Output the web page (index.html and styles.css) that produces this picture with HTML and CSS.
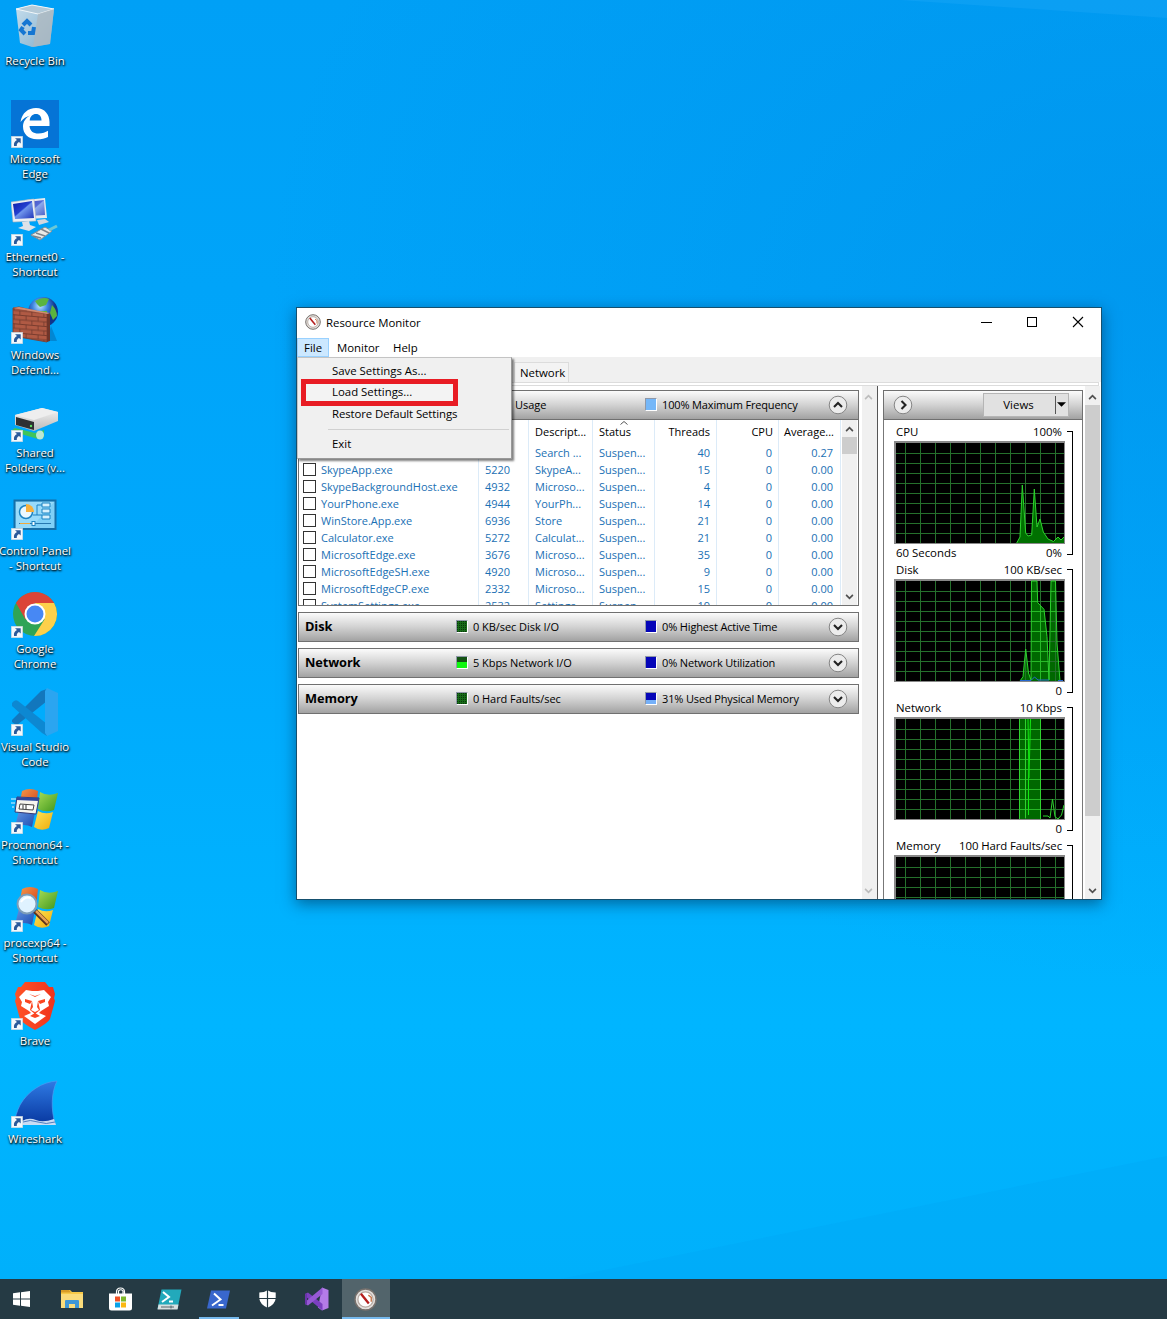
FILE: index.html
```html
<!DOCTYPE html>
<html lang="en">
<head>
<meta charset="utf-8">
<title>Resource Monitor</title>
<link rel="stylesheet" href="styles.css">
</head>
<body>
<svg class="defs" width="0" height="0" aria-hidden="true">
  <defs>
    <linearGradient id="gBin" x1="0" y1="0" x2="1" y2="1"><stop offset="0" stop-color="#d7e3ec"/><stop offset="1" stop-color="#8fb0c8"/></linearGradient>
    <linearGradient id="gScreen" x1="0" y1="0" x2="1" y2="1"><stop offset="0" stop-color="#0b1aa8"/><stop offset=".45" stop-color="#2440cf"/><stop offset=".5" stop-color="#6f95ec"/><stop offset="1" stop-color="#1c31b8"/></linearGradient>
    <linearGradient id="gDrive" x1="0" y1="0" x2="0" y2="1"><stop offset="0" stop-color="#f4f4f4"/><stop offset="1" stop-color="#b9b9b9"/></linearGradient>
    <linearGradient id="gFin" x1="0" y1="0" x2="0" y2="1"><stop offset="0" stop-color="#2f7ae4"/><stop offset="1" stop-color="#0838a0"/></linearGradient>
    <linearGradient id="gBrave" x1="0" y1="0" x2="1" y2="0"><stop offset="0" stop-color="#ff5326"/><stop offset="1" stop-color="#f0331c"/></linearGradient>
    <linearGradient id="gR" x1="0" y1="0" x2="1" y2="1"><stop offset="0" stop-color="#f59a4a"/><stop offset="1" stop-color="#d2401a"/></linearGradient>
    <linearGradient id="gG" x1="0" y1="0" x2="1" y2="1"><stop offset="0" stop-color="#a5dc55"/><stop offset="1" stop-color="#3f961c"/></linearGradient>
    <linearGradient id="gB" x1="0" y1="0" x2="1" y2="1"><stop offset="0" stop-color="#6a9be6"/><stop offset="1" stop-color="#1c4bb0"/></linearGradient>
    <linearGradient id="gY" x1="0" y1="0" x2="1" y2="1"><stop offset="0" stop-color="#ffe65a"/><stop offset="1" stop-color="#eeab0a"/></linearGradient>
    <radialGradient id="gGlobe" cx=".4" cy=".3"><stop offset="0" stop-color="#bfe6ff"/><stop offset=".5" stop-color="#3c84e0"/><stop offset="1" stop-color="#10348c"/></radialGradient>
    <path id="grid" d="M10.500 1V101M25.500 1V101M40.500 1V101M55.500 1V101M70.500 1V101M85.500 1V101M100.500 1V101M115.500 1V101M130.500 1V101M145.500 1V101M160.500 1V101M1 11.500H169M1 21.500H169M1 31.500H169M1 41.500H169M1 51.500H169M1 61.500H169M1 71.500H169M1 81.500H169M1 91.500H169" stroke="#25702c" fill="none"/>
    <pattern id="bricks" width="12" height="9" patternUnits="userSpaceOnUse" patternTransform="skewY(5)"><rect width="12" height="9" fill="#b05a44"/><path d="M0 .5H12M0 5H12M3 0V5M9 5V9" stroke="#6d362a" stroke-width=".8"/></pattern>
    <symbol id="shortcut" viewBox="0 0 12 12"><path d="M.3 .3H11.7V11.7H.3Z" fill="#f4f8fb" stroke="#cbd5dc" stroke-width=".6"/><path d="M4 2.2H9.7V7.6L8 6C6.200 7 5.600 8 5.800 10H3C2.600 7 3.800 5.200 6 4.100Z" fill="#2a5a9b"/></symbol>
    <symbol id="flag" viewBox="0 0 48 48"><path d="M11 5Q19 1 27 5L25 22Q17 18 8 22Z" fill="url(#gR)"/><path d="M29 6Q37 11 47 7L43 24Q35 27 27 23Z" fill="url(#gG)"/><path d="M8 24Q16 20 24.500 24L21 41Q13 37 4 41Z" fill="url(#gB)"/><path d="M27 25Q34 29 42 26L38 42Q30 46 23 41Z" fill="url(#gY)"/></symbol>
    <symbol id="gauge" viewBox="0 0 16 16"><circle cx="8" cy="8" r="7.300" fill="#e4e0dd" stroke="#77716d" stroke-width="1"/><circle cx="8" cy="8" r="5.300" fill="#fff" stroke="#b7aaa3" stroke-width=".9"/><path d="M4.800 4L10.300 10.800" stroke="#b51d1d" stroke-width="1.600"/><path d="M10 5l2 1.500v3" stroke="#c87a50" fill="none"/></symbol>
    <symbol id="up" viewBox="0 0 10 7"><path d="M1 6L5 2L9 6" fill="none" stroke="currentColor" stroke-width="2"/></symbol>
    <symbol id="down" viewBox="0 0 10 7"><path d="M1 1L5 5L9 1" fill="none" stroke="currentColor" stroke-width="2"/></symbol>
  </defs>
</svg>

<main class="desktop">
  <svg class="rays" width="1167" height="1279" viewBox="0 0 1167 1279" preserveAspectRatio="none" aria-hidden="true">
    <path d="M560 1279L1167 1156V1279Z" fill="#009ff0" opacity=".22"/>
    <path d="M900 0H1167V18Z" fill="#39b5ff" opacity=".2"/>
  </svg>

  <nav class="icons">
    <div class="icon"><svg viewBox="0 0 48 48"><path d="M5 7L21 3L43 7L39 42L21 45L9 41Z" fill="url(#gBin)" opacity=".92"/><path d="M5 7L21 3L43 7L27 12Z" fill="#b4cad8" stroke="#f2f7fa"/><path d="M27 12L43 7L39 42L22 45Z" fill="#aeb9c1" opacity=".8"/><g fill="none" stroke="#1576d2" stroke-width="4"><path d="M12 23L16 19L20 23"/><path d="M23 25L22 31L17 31"/><path d="M14 32L10 28L12 25"/></g></svg><span>Recycle Bin</span></div>
    <div class="icon"><svg viewBox="0 0 48 48"><rect width="48" height="48" fill="#0574d6"/><path d="M9.500 22C11 13 17 8 25 8C34 8 38.500 15 38.500 22V26H18.500C19 31 22 33.500 27.500 33.500C31.500 33.500 34.500 32.300 37 30.800V37C34 38.500 30.500 39.300 26 39.300C17.500 39.300 12 34 12 26.500C12 21.500 15 17.500 19.500 15.500C15.500 16.500 12 18.500 9.500 22ZM18.700 20.500H30.500C30.500 16.500 28.500 14 25 14C21.500 14 19 16.500 18.700 20.500Z" fill="#fff"/><use href="#shortcut" x="0" y="36" width="12" height="12"/></svg><span>Microsoft<br>Edge</span></div>
    <div class="icon"><svg viewBox="0 0 48 48"><path d="M14 2L34 0L36 20L16 21Z" fill="#e6e9ee"/><path d="M16 4L33 2L34 17L18 18Z" fill="url(#gScreen)" opacity=".75"/><path d="M26 22L34 21L38 24L28 27Z" fill="#d2d6de"/><path d="M0 4L23 1L25 23L2 24Z" fill="#eceff3" stroke="#aeb5c0" stroke-width=".6"/><path d="M2 6L21 3L23 20L4 21Z" fill="url(#gScreen)"/><path d="M11 24L18 23L19 27L25 29L18 33L7 30L12 28Z" fill="#dfe2e8"/><path d="M20 37L34 29L41 33L29 42Z" fill="#e9e9e6" stroke="#858c94"/><path d="M22 38L30 40M25 35L34 38M30 31L38 35" stroke="#7c838c" stroke-width="1.500"/><path d="M38 32L46 28" stroke="#6bc7d5" stroke-width="3"/><use href="#shortcut" x="0" y="36" width="12" height="12"/></svg><span>Ethernet0 -<br>Shortcut</span></div>
    <div class="icon"><svg viewBox="0 0 48 48"><circle cx="32" cy="16" r="15" fill="url(#gGlobe)"/><path d="M24 5Q32 0 38 3L35 9L29 11L26 8ZM41 9Q46 14 46 20L42 24L39 17ZM28 15L36 15L36 22L30 24Z" fill="#5ab43f"/><path d="M40 30L46 45H36Z" fill="#06417c" opacity=".3"/><path d="M2 12L8 11L36 18V46L2 40Z" fill="url(#bricks)" stroke="#7b3a2c" stroke-width=".8"/><path d="M36 18L39 17V45L36 46Z" fill="#70352a"/><path d="M2 12L8 11L39 17L36 18Z" fill="#d08a72"/><use href="#shortcut" x="0" y="36" width="12" height="12"/></svg><span>Windows<br>Defend...</span></div>
    <div class="icon"><svg viewBox="0 0 48 48"><path d="M4 34L24 39L33 36L33 43L27 45L0 37Z" fill="#3fc45a"/><ellipse cx="29" cy="41" rx="4" ry="4.500" fill="#bce7d2"/><path d="M4 21L31 14L47 18V27L23 37L4 31Z" fill="url(#gDrive)"/><path d="M5 23L23 28V36L5 31Z" fill="#2e3032"/><path d="M4 21L31 14L47 18L23 26Z" fill="#eee"/><circle cx="20" cy="32" r="1.200" fill="#5fe063"/><use href="#shortcut" x="0" y="36" width="12" height="12"/></svg><span>Shared<br>Folders (v...</span></div>
    <div class="icon"><svg viewBox="0 0 48 48"><rect x="3.500" y="8.500" width="41" height="28.500" fill="#7fd0f7" stroke="#156fa8" stroke-width="2"/><path d="M5 10H43L20 36H5Z" fill="#a9e2fb" opacity=".6"/><circle cx="15" cy="20" r="6.500" fill="#eaf8ff" stroke="#1b83c3" stroke-width="1.500"/><path d="M15 20V12A8 8 0 0 1 23 20Z" fill="#f6b03c"/><path d="M22 23H26V13H31M26 23H31" stroke="#1b83c3" fill="none"/><path d="M31 11h8v4h-8zM31 17h8v4h-8zM31 23h8v4h-8z" fill="#d6f1fd" stroke="#1b83c3"/><path d="M8 31.500H40" stroke="#2778b0"/><path d="M9 31.500h10" stroke="#f0a93b"/><rect x="21" y="29.500" width="3" height="4" fill="#fff" stroke="#1b83c3"/><use href="#shortcut" x="0" y="36" width="12" height="12"/></svg><span>Control Panel<br>- Shortcut</span></div>
    <div class="icon"><svg viewBox="0 0 48 48"><circle cx="24" cy="24" r="22" fill="#2fa456"/><path d="M5 13A22 22 0 0 1 43.100 13H24L14.500 29.500Z" fill="#db4437"/><path d="M43.100 13A22 22 0 0 1 23 46L33.500 29.500L24 13Z" fill="#fdd04b"/><circle cx="24" cy="24" r="10.500" fill="#fff"/><circle cx="24" cy="24" r="8.500" fill="#4788f4"/><use href="#shortcut" x="0" y="36" width="12" height="12"/></svg><span>Google<br>Chrome</span></div>
    <div class="icon"><svg viewBox="0 0 48 48"><path d="M1 32L30 3L36 1V13L6 37Q3 36 1 34Z" fill="#1277bd"/><path d="M1 15Q4 11 7 13L36 36V48L31 45L1 18Z" fill="#0d88d2"/><path d="M36 0L47 5V43L36 48L34 45V3Z" fill="#2ba5f0"/><use href="#shortcut" x="0" y="36" width="12" height="12"/></svg><span>Visual Studio<br>Code</span></div>
    <div class="icon"><svg viewBox="0 0 48 48"><use href="#flag" width="48" height="48"/><path d="M6 11L28 12L25 28L4 26Z" fill="#f6f5ef" stroke="#353a76"/><path d="M6 11L28 12L27.500 15L5.500 14Z" fill="#30479c"/><path d="M9 18L23 19L22 24L8 23Z" fill="#fff" stroke="#444"/><path d="M12 19v4M15 19v4" stroke="#333"/><path d="M0 13H5M0 17H4M1 21H3" stroke="#e7f4ff"/><use href="#shortcut" x="0" y="36" width="12" height="12"/></svg><span>Procmon64 -<br>Shortcut</span></div>
    <div class="icon"><svg viewBox="0 0 48 48"><use href="#flag" width="48" height="48"/><path d="M24 27L37 40" stroke="#5b331b" stroke-width="5"/><path d="M25 27L37 39" stroke="#e7a052" stroke-width="2.500"/><circle cx="16" cy="20" r="9.500" fill="#dff2ff" stroke="#7d9db8" stroke-width="2"/><path d="M10 18Q14 12 20 14" stroke="#fff" stroke-width="2" fill="none"/><use href="#shortcut" x="0" y="36" width="12" height="12"/></svg><span>procexp64 -<br>Shortcut</span></div>
    <div class="icon"><svg viewBox="0 0 48 48"><path d="M14 0H34L38 5L42 5L44 12L43 16L44 19L39 37Q37 41 24 48Q11 41 9 37L4 19L5 16L4 12L7 5L10 5Z" fill="url(#gBrave)"/><path d="M15 8L21 9H27L33 8L40 15L37 20L38 24L30 29L28 31L35 34L24 42L13 34L20 31L18 29L10 24L11 20L8 15Z" fill="#fff"/><path d="M14 17L21 19L19 22L14 20ZM34 17L27 19L29 22L34 20ZM21 19L22 25L20 28L24 30L28 28L26 25L27 19L29 28L24 32L19 28ZM18 12L24 14L30 12L24 15ZM19 34L24 31L29 34L24 36Z" fill="#fb4520"/><use href="#shortcut" x="0" y="36" width="12" height="12"/></svg><span>Brave</span></div>
    <div class="icon"><svg viewBox="0 0 48 48"><path d="M46 1C31 2 17 11 9 25C6 31 4 38 3 44H44C40 29 40 13 46 1Z" fill="url(#gFin)" stroke="#4d9af0" stroke-width=".7"/><path d="M11 41Q18 37 25 40T43 39L45 45H11Z" fill="#c9dcf4"/><path d="M12 42Q19 39 27 42T44 42" stroke="#517fc0" fill="none"/><use href="#shortcut" x="0" y="36" width="12" height="12"/></svg><span>Wireshark</span></div>
  </nav>

  <section class="window">
    <header class="titlebar">
      <svg class="app-icon" viewBox="0 0 16 16"><use href="#gauge"/></svg>
      <span class="title">Resource Monitor</span>
      <svg class="ctl" viewBox="0 0 46 30"><path d="M18 14.500H29" stroke="#000"/></svg>
      <svg class="ctl" viewBox="0 0 46 30"><rect x="18.500" y="9.500" width="9" height="9" fill="none" stroke="#000"/></svg>
      <svg class="ctl" viewBox="0 0 46 30"><path d="M18 9L28 19M28 9L18 19" stroke="#000" stroke-width="1.100"/></svg>
    </header>
    <nav class="menubar"><span class="open">File</span><span class="monitor">Monitor</span><span>Help</span></nav>
    <div class="tabs"><span>Network</span></div>
    <div class="tabline"></div>

    <div class="body">
      <div class="left">
        <div class="bar cpu">
          <div class="m1"><span class="usage">Usage</span></div>
          <div class="m2"><i class="sq light"></i>100% Maximum Frequency</div>
          <svg class="knob" viewBox="0 0 20 20"><circle cx="10" cy="10" r="8.800"/><path d="M6 12L10 8L14 12"/></svg>
        </div>
        <div class="table">
          <div class="grid">
            <div class="row head"><b></b><span></span><span></span><span>Descript...</span><span class="sorted">Status<svg viewBox="0 0 8 4"><path d="M.5 3.500L4 .5L7.500 3.500" fill="none" stroke="#555"/></svg></span><span>Threads</span><span>CPU</span><span>Average...</span></div>
            <div class="row"><b></b><span></span><span></span><span>Search ...</span><span>Suspen...</span><span>40</span><span>0</span><span>0.27</span></div>
            <div class="row"><b></b><span>SkypeApp.exe</span><span>5220</span><span>SkypeA...</span><span>Suspen...</span><span>15</span><span>0</span><span>0.00</span></div>
            <div class="row"><b></b><span>SkypeBackgroundHost.exe</span><span>4932</span><span>Microso...</span><span>Suspen...</span><span>4</span><span>0</span><span>0.00</span></div>
            <div class="row"><b></b><span>YourPhone.exe</span><span>4944</span><span>YourPh...</span><span>Suspen...</span><span>14</span><span>0</span><span>0.00</span></div>
            <div class="row"><b></b><span>WinStore.App.exe</span><span>6936</span><span>Store</span><span>Suspen...</span><span>21</span><span>0</span><span>0.00</span></div>
            <div class="row"><b></b><span>Calculator.exe</span><span>5272</span><span>Calculat...</span><span>Suspen...</span><span>21</span><span>0</span><span>0.00</span></div>
            <div class="row"><b></b><span>MicrosoftEdge.exe</span><span>3676</span><span>Microso...</span><span>Suspen...</span><span>35</span><span>0</span><span>0.00</span></div>
            <div class="row"><b></b><span>MicrosoftEdgeSH.exe</span><span>4920</span><span>Microso...</span><span>Suspen...</span><span>9</span><span>0</span><span>0.00</span></div>
            <div class="row"><b></b><span>MicrosoftEdgeCP.exe</span><span>2332</span><span>Microso...</span><span>Suspen...</span><span>15</span><span>0</span><span>0.00</span></div>
            <div class="row"><b></b><span>SystemSettings.exe</span><span>2532</span><span>Settings</span><span>Suspen...</span><span>19</span><span>0</span><span>0.00</span></div>
          </div>
          <div class="scroll inner"><svg viewBox="0 0 10 7"><use href="#up"/></svg><i></i><svg viewBox="0 0 10 7"><use href="#down"/></svg></div>
        </div>
        <div class="bar"><h2>Disk</h2><div class="m1"><i class="sq green"></i><span>0 KB/sec Disk I/O</span></div><div class="m2"><i class="sq blue"></i>0% Highest Active Time</div><svg class="knob" viewBox="0 0 20 20"><circle cx="10" cy="10" r="8.800"/><path d="M6 8L10 12L14 8"/></svg></div>
        <div class="bar"><h2>Network</h2><div class="m1"><i class="sq green half"></i><span>5 Kbps Network I/O</span></div><div class="m2"><i class="sq blue"></i>0% Network Utilization</div><svg class="knob" viewBox="0 0 20 20"><circle cx="10" cy="10" r="8.800"/><path d="M6 8L10 12L14 8"/></svg></div>
        <div class="bar"><h2>Memory</h2><div class="m1"><i class="sq green"></i><span>0 Hard Faults/sec</span></div><div class="m2"><i class="sq blue third"></i>31% Used Physical Memory</div><svg class="knob" viewBox="0 0 20 20"><circle cx="10" cy="10" r="8.800"/><path d="M6 8L10 12L14 8"/></svg></div>
      </div>
      <div class="scroll outer"><svg viewBox="0 0 10 7"><use href="#up"/></svg><svg viewBox="0 0 10 7"><use href="#down"/></svg></div>

      <aside class="right">
        <div class="rhead">
          <svg class="knob" viewBox="0 0 20 20"><circle cx="10" cy="10" r="8.800"/><path d="M8.500 6L12.500 10L8.500 14"/></svg>
          <div class="views"><span>Views</span><svg viewBox="0 0 10 5"><path d="M0 0H10L5 5Z"/></svg></div>
        </div>
        <div class="chart"><div class="cap"><span>CPU</span><span>100%</span></div>
          <svg class="plot" viewBox="0 0 171 103"><path d="M0 0H171V103H0Z" fill="#888"/><path d="M2 2H170V102H2Z" fill="#000"/><g transform="translate(1 1)"><use href="#grid"/><path d="M121.700 101L125 95L127.300 43L130.700 91L133 94L136.700 93L139.300 47L142 85L145 77L148.300 90L153 97L158.500 99.500L163 95L166 98L169 95V101Z" fill="#007000"/><path class="line" d="M121.700 101L125 95L127.300 43L130.700 91L133 94L136.700 93L139.300 47L142 85L145 77L148.300 90L153 97L158.500 99.500L163 95L166 98L169 95"/></g></svg>
          <div class="cap foot"><span>60 Seconds</span><span>0%</span></div><i class="bracket"></i></div>
        <div class="chart"><div class="cap"><span>Disk</span><span>100 KB/sec</span></div>
          <svg class="plot" viewBox="0 0 171 103"><path d="M0 0H171V103H0Z" fill="#888"/><path d="M2 2H170V102H2Z" fill="#000"/><g transform="translate(1 1)"><path d="M125 101L128 96.700L130.700 69L133.500 93L136 100L136.500 1H142L142.700 22.700L149 29.300L152 56.700L154 100L156 1H160.500L162 63L165 101Z" fill="#006800"/><use href="#grid"/><path d="M137 11.500H142M137 21.500H142M137 31.500H149M137 41.500H150M137 51.500H151M137 61.500H152M137 71.500H152M137 81.500H153M137 91.500H153M156 11.500H160M156 31.500H161M156 51.500H161M156 71.500H162M145.500 26V100" stroke="#27b927"/><path class="line" d="M125 101L128 96.700L130.700 69L133.500 93L136 100L136.500 1H142L142.700 22.700L149 29.300L152 56.700L154 100L156 1H160.500L162 63L165 101"/><path d="M125 100.500H136L139.500 97L143 100H154M163 100.500H168" stroke="#2668d0" fill="none"/></g></svg>
          <div class="cap foot"><span></span><span>0</span></div><i class="bracket"></i></div>
        <div class="chart"><div class="cap"><span>Network</span><span>10 Kbps</span></div>
          <svg class="plot" viewBox="0 0 171 103"><path d="M0 0H171V103H0Z" fill="#888"/><path d="M2 2H170V102H2Z" fill="#000"/><g transform="translate(1 1)"><path d="M124 1H146V101H124Z" fill="#006800"/><use href="#grid"/><path d="M124 11.500H146M124 21.500H146M124 31.500H146M124 41.500H146M124 51.500H146M124 61.500H146M124 71.500H146M124 81.500H146M124 91.500H146" stroke="#27b927"/><path class="line" d="M124.500 101V1M130.500 1V100M145.500 1V101M148 98L153 98L155 100L157.500 81L160 98.700L163 101L166.500 97L169 87"/><path d="M135.500 1L134.500 40L133.500 62V97M133 1L134 60" stroke="#12e812" fill="none"/></g></svg>
          <div class="cap foot"><span></span><span>0</span></div><i class="bracket"></i></div>
        <div class="chart"><div class="cap"><span>Memory</span><span class="tight">100 Hard Faults/sec</span></div>
          <svg class="plot" viewBox="0 0 171 103"><path d="M0 0H171V103H0Z" fill="#888"/><path d="M2 2H170V102H2Z" fill="#000"/><g transform="translate(1 1)"><use href="#grid"/></g></svg><i class="bracket"></i></div>
      </aside>
      <div class="scroll side"><svg viewBox="0 0 10 7"><use href="#up"/></svg><i></i><svg viewBox="0 0 10 7"><use href="#down"/></svg></div>
    </div>

    <div class="menu"><span>Save Settings As...</span><span class="marked">Load Settings...</span><span class="tight">Restore Default Settings</span><hr><span>Exit</span></div>
  </section>
</main>

<footer class="taskbar">
  <div class="task start"><svg width="17" height="16" viewBox="0 0 17 16"><path d="M0 2.300L7 1.300V7.500H0ZM8 1.200L17 0V7.500H8ZM0 8.500H7V14.700L0 13.700ZM8 8.500H17V16L8 14.800Z" fill="#fff"/></svg></div>
  <div class="task"><svg width="22" height="20" viewBox="0 0 22 20"><path d="M0 1H9L11 3H22V19H0Z" fill="#f7c948"/><path d="M0 1H8L10 3.500H0Z" fill="#d99c26"/><path d="M0 5H22V19H0Z" fill="#fbdc7b"/><path d="M4 19V12Q4 11 5 11H17Q18 11 18 12V19H14V15H8V19Z" fill="#3f97d6"/></svg></div>
  <div class="task"><svg width="23" height="24" viewBox="0 0 23 24"><path d="M7.500 8V5Q7.500 1 11.500 1T15.500 5V8M9.500 7V4Q12 1.500 14 4V7" fill="none" stroke="#fff" stroke-width="1.200"/><path d="M0 6.500H23V21Q23 23.500 20.500 23.500H2.500Q0 23.500 0 21Z" fill="#fff"/><path d="M6 9.500H11V14.500H6Z" fill="#ef5126"/><path d="M12 9.500H17V14.500H12Z" fill="#7db82a"/><path d="M6 15.500H11V20.500H6Z" fill="#0aa2e8"/><path d="M12 15.500H17V20.500H12Z" fill="#fbb813"/></svg></div>
  <div class="task"><svg width="25" height="21" viewBox="0 0 25 21"><path d="M4.500 .5H24.500L20.500 20H.5Z" fill="#22a9bb"/><path d="M1.500 15.500H21.500L20.500 20.500H.5Z" fill="#d8dfe0"/><path d="M6 3L12 8L5 13M12 12.500H16" fill="none" stroke="#fff" stroke-width="2"/><path d="M4 18H17M14 16.500V19.500" stroke="#54656b"/></svg></div>
  <div class="task running"><svg width="23" height="19" viewBox="0 0 23 19"><path d="M4 .5H23L19 18.500H0Z" fill="#3967cd"/><path d="M7 3.500L13.500 9.500L5 15.500M11.500 15H16.500" fill="none" stroke="#fff" stroke-width="2"/></svg></div>
  <div class="task"><svg width="17" height="18" viewBox="0 0 17 18"><path d="M8.500 .3Q11.500 2.500 16.700 2.500V8.500Q16 14.500 8.500 17.800Q1 14.500 .3 8.500V2.500Q5.500 2.500 8.500 .3Z" fill="#fff"/><path d="M8.500 0V18M0 8.500H17" stroke="#253a44" stroke-width="1.200"/></svg></div>
  <div class="task"><svg width="24" height="24" viewBox="0 0 24 24"><path d="M17 .5L23.500 3V21L17 23.500L13 20.500Z" fill="#b47be8"/><path d="M0 7L3 5.500L17.500 17V23.500L0 9Z" fill="#7b3fc0"/><path d="M17.500 .5V7L3 18.500L0 17V15Z" fill="#9659d4"/><path d="M0 7L2 6V18L0 17Z" fill="#6a34aa"/></svg></div>
  <div class="task active"><svg width="23" height="23" viewBox="0 0 16 16"><use href="#gauge"/></svg></div>
</footer>
</body>
</html>
```
FILE: styles.css
```css
* { box-sizing: border-box; }

body {
  margin: 0;
  width: 1167px;
  height: 1320px;
  background: #fff;
  font: 11.4px/15px "Open Sans", "Noto Sans", sans-serif;
  color: #000;
  overflow: hidden;
}

svg { display: block; flex: none; }
.defs { position: absolute; }

.desktop {
  position: relative;
  height: 1279px;
  padding-top: 2px;
  background:
    radial-gradient(ellipse 900px 700px at 100% 22%, rgba(0, 132, 222, .36), transparent),
    linear-gradient(180deg, #00a0f6 0%, #00a8fc 45%, #00b5ff 80%, #00b0fb 100%);
}
.rays { position: absolute; left: 0; top: 0; }

.icons {
  position: relative;
  display: grid;
  grid-template-columns: 70px;
  grid-auto-rows: 98px;
  width: 70px;
}
.icon { display: flex; flex-direction: column; align-items: center; }
.icon svg { width: 48px; height: 48px; }
.icon span {
  margin-top: 3px;
  text-align: center;
  white-space: nowrap;
  color: #fff;
  text-shadow: 0 1px 2px #000, 1px 1px 2px rgba(0, 0, 0, .9);
}

.window {
  position: absolute;
  left: 296px;
  top: 307px;
  width: 806px;
  height: 593px;
  display: flex;
  flex-direction: column;
  border: 1px solid #15506f;
  background: #fff;
  box-shadow: 0 4px 14px rgba(0, 30, 60, .5);
}

.titlebar { display: flex; height: 30px; align-items: center; padding-left: 8px; }
.app-icon { width: 16px; height: 16px; margin-bottom: 2px; }
.title { flex: 1; margin: 0 0 2px 5px; }
.ctl { width: 46px; height: 30px; }

.menubar { display: flex; height: 19px; line-height: 19px; }
.menubar span { padding: 0 7px; }
.menubar .open { width: 32px; padding: 0 6px; line-height: 17px; background: #cce8ff; border: 1px solid #99d1ff; }
.menubar .monitor { width: 57px; padding-left: 8px; }

.tabs { display: flex; height: 25px; padding: 5px 0 0 217px; background: #f0f0f0; }
.tabs span { width: 55px; padding: 2px 0 0 5px; border: 1px solid #dcdcdc; border-bottom: 0; background: #f3f3f3; }
.tabline { height: 4px; margin-right: 2px; border: 1px solid #dcdcdc; border-left: 0; }

.body { flex: 1; display: flex; min-height: 0; font-size: 11px; }
.left { width: 565px; padding: 4px 3px 0 1px; }

.bar {
  display: flex;
  align-items: center;
  height: 30px;
  margin-bottom: 6px;
  padding: 0 0 1px 6px;
  border: 1px solid #707070;
  background: linear-gradient(#fbfbfb, #d2d2d2 50%, #a2a2a2);
}
.bar h2 { width: 151px; margin: 0; font-size: 12.8px; letter-spacing: -.1px; font-weight: 700; }
.bar.cpu { margin: 0; padding-left: 157px; }
.m1, .m2 { display: flex; align-items: center; white-space: nowrap; }
.m1 { width: 189px; letter-spacing: -.05px; }
.m2 { width: 183px; letter-spacing: -.15px; }
.usage { margin-left: 59px; }
.sq { width: 12px; height: 13px; margin-right: 5px; border: 1px solid #8f98a8; border-right-color: #fff; border-bottom-color: #fff; }
.light { background: #75b7f8; }
.green { background: repeating-linear-gradient(90deg, transparent 0 1px, #176b18 1px 2px), repeating-linear-gradient(#0a360b 0 1px, #176b18 1px 2px); }
.half { background: linear-gradient(#145214 45%, #10f610 45%); }
.blue { background: #0505b8; }
.third { background: linear-gradient(#0505b8 65%, #75b0f8 65%); }
.knob { width: 20px; height: 20px; }
.knob circle { fill: #ececec; stroke: #858585; }
.knob path { fill: none; stroke: #222; stroke-width: 2.1; }

.table { display: flex; height: 186px; margin-bottom: 6px; border: solid #707070; border-width: 0 1px 1px; }
.grid {
  flex: 1;
  overflow: hidden;
  background:
    linear-gradient(#dcebf8, #dcebf8) 179px 0 / 1px 100% no-repeat,
    linear-gradient(#dcebf8, #dcebf8) 229px 0 / 1px 100% no-repeat,
    linear-gradient(#dcebf8, #dcebf8) 293px 0 / 1px 100% no-repeat,
    linear-gradient(#dcebf8, #dcebf8) 355px 0 / 1px 100% no-repeat,
    linear-gradient(#dcebf8, #dcebf8) 417px 0 / 1px 100% no-repeat,
    linear-gradient(#dcebf8, #dcebf8) 479px 0 / 1px 100% no-repeat,
    linear-gradient(#dcebf8, #dcebf8) 541px 0 / 1px 100% no-repeat;
}
.row {
  display: grid;
  grid-template-columns: 22px 164px 50px 64px 62px 49px 62px 61px;
  height: 17px;
  line-height: 17px;
  color: #1a70b4;
  white-space: nowrap;
}
.row b { width: 13px; height: 13px; margin: 2px 0 0 4px; border: 1px solid #333; background: #fff; }
.row span:nth-child(n+6) { text-align: right; }
.row.head { height: 24px; line-height: 24px; color: #000; grid-template-columns: 22px 164px 50px 64px 62px 49px 63px 61px; }
.row.head b { visibility: hidden; }
.sorted { position: relative; }
.sorted svg { position: absolute; left: 21px; top: 1px; width: 8px; height: 4px; }

.scroll { display: flex; flex-direction: column; align-items: center; width: 15px; background: #f0f0f0; color: #505050; }
.scroll svg { width: 9px; height: 6px; }
.scroll svg:last-child { margin-top: auto; }
.scroll i { width: 100%; background: #cdcdcd; }
.inner { padding: 6px 0 5px; margin-right: 1px; }
.inner i { height: 17px; margin-top: 5px; }
.outer { padding: 8px 2px 5px 0; color: #bdbdbd; width: 15px; }
.side { padding: 8px 0 5px; margin-left: 2px; }
.side i { height: 411px; margin-top: 5px; }

.right {
  width: 206px;
  padding: 4px 0 0 5px;
  border-left: 1px solid #555;
  overflow: hidden;
  font-size: 11.4px;
}
.rhead { display: flex; align-items: center; justify-content: space-between; height: 30px; padding: 0 13px 1px 9px; border: 1px solid #707070; background: linear-gradient(#fbfbfb, #d2d2d2 50%, #a2a2a2); }
.views { display: flex; align-items: center; width: 86px; height: 24px; background: #e1e1e1; border: 1px solid #b5b5b5; }
.views span { width: 72px; height: 18px; padding-right: 2px; line-height: 18px; text-align: center; border-right: 1px solid #555; }
.views svg { width: 9px; height: 5px; margin-left: 1px; }
.chart { position: relative; height: 138px; padding: 3px 0 0 10px; border: solid #777; border-width: 0 1px; }
.cap { display: flex; justify-content: space-between; width: 168px; height: 18px; padding-left: 2px; line-height: 18px; white-space: nowrap; }
.plot { width: 171px; height: 103px; }
.foot { height: 14px; line-height: 17px; }
.bracket { position: absolute; left: 183px; top: 11px; width: 6px; height: 124px; border: solid #000; border-width: 1px 1px 1px 0; }
.line { fill: none; stroke: #2ed32e; stroke-width: 1; }
.tight { letter-spacing: -.1px; }

.menu {
  position: absolute;
  left: 0;
  top: 49px;
  width: 215px;
  height: 102px;
  padding: 3px;
  display: flex;
  flex-direction: column;
  background: #f0f0f0;
  border: 1px solid #c4c4c4;
  border-right-color: #999;
  border-bottom-color: #999;
  box-shadow: 2px 2px 2px rgba(0, 0, 0, .5);
}
.menu span { height: 22px; line-height: 20px; padding-left: 31px; }
.menu .marked { width: 157px; height: 27px; margin: -3px 0 -2px 0; line-height: 16px; padding-left: 26px; border: 5px solid #e81c24; background: #f3f3f3; }
.menu hr { width: 181px; margin: 3px 0 4px 27px; border: 0; border-top: 1px solid #d0d0d0; flex: none; }

.taskbar { display: flex; gap: 1px; height: 40px; background: #253a44; }
.task { width: 48px; height: 40px; display: flex; align-items: center; justify-content: center; padding-right: 1px; }
.start { width: 47px; padding-right: 5px; }
.running { background: linear-gradient(#76b9ed, #76b9ed) 4px 38px / 40px 2px no-repeat; }
.active { background: linear-gradient(#76b9ed, #76b9ed) 0 38px / 100% 2px no-repeat #52646b; }
```
